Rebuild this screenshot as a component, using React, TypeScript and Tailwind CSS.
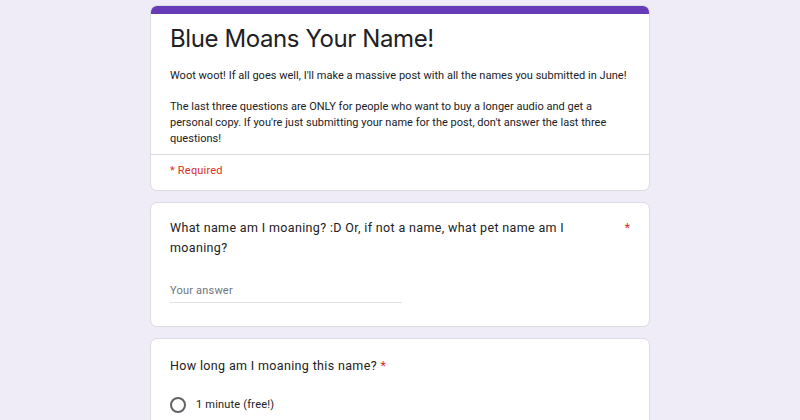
import { useState } from "react";

const sans = "font-['Roboto','Liberation_Sans',sans-serif]";
const title = "font-['Inter','Noto_Sans',sans-serif]";

export default function App() {
  const [picked, setPicked] = useState<string | null>(null);

  return (
    <div className={`h-[420px] w-[800px] overflow-hidden bg-[#efebf7] ${sans}`}>
      <div className="mx-auto flex w-[500px] flex-col gap-[11px] pt-[5px]">
        {/* header card */}
        <div className="overflow-hidden rounded-[7px] border border-[#dadce0] bg-white">
          <div className="h-[8px] bg-[#673ab7]" />
          <div className="px-[19px] pb-[7px] pt-[8px]">
            <h1 className={`text-[24px] leading-[34px] tracking-[-0.4px] text-[#202124] ${title}`}>
              Blue Moans Your Name!
            </h1>
            <div className="mt-[12px] text-[11px] leading-[16px] tracking-[0.02px] text-[#202124]">
              <p>Woot woot! If all goes well, I'll make a massive post with all the names you submitted in June!</p>
              <p className="mt-[15px]">
                The last three questions are ONLY for people who want to buy a longer audio and get a personal
                copy. If you're just submitting your name for the post, don't answer the last three questions!
              </p>
            </div>
          </div>
          <div className="border-t border-[#dadce0] px-[19px] pb-[11px] pt-[8px] text-[11px] leading-[16px] tracking-[0.2px] text-[#d93025]">
            * Required
          </div>
        </div>

        {/* question 1 */}
        <div className="rounded-[7px] border border-[#dadce0] bg-white px-[19px] pb-[23px] pt-[15px]">
          <div className="flex items-start justify-between gap-4">
            <p className="w-[410px] text-[12.5px] leading-[20px] tracking-[0.35px] text-[#202124]">
              What name am I moaning? :D Or, if not a name, what pet name am I moaning?
            </p>
            <span className="text-[12px] leading-[20px] text-[#d93025]">*</span>
          </div>
          <div className="mt-[25px] w-[232px] border-b border-[#e0e0e0] pb-[3px] text-[11px] leading-[16px] tracking-[0.2px] text-[#70757a]">
            Your answer
          </div>
        </div>

        {/* question 2 */}
        <div className="rounded-[7px] border border-[#dadce0] bg-white px-[19px] pb-[24px] pt-[17px]">
          <p className="text-[12.5px] leading-[20px] tracking-[0.35px] text-[#202124]">
            How long am I moaning this name? <span className="text-[#d93025]">*</span>
          </p>
          <label className="mt-[21px] flex cursor-pointer items-center gap-[10px]">
            <span
              onClick={() => setPicked("1")}
              className="grid h-[16px] w-[16px] place-items-center rounded-full border-2 border-[#5f6368]"
            >
              {picked === "1" && <span className="h-[8px] w-[8px] rounded-full bg-[#673ab7]" />}
            </span>
            <span className="text-[11px] leading-[16px] tracking-[0.2px] text-[#202124]">1 minute (free!)</span>
          </label>
        </div>
      </div>
    </div>
  );
}
